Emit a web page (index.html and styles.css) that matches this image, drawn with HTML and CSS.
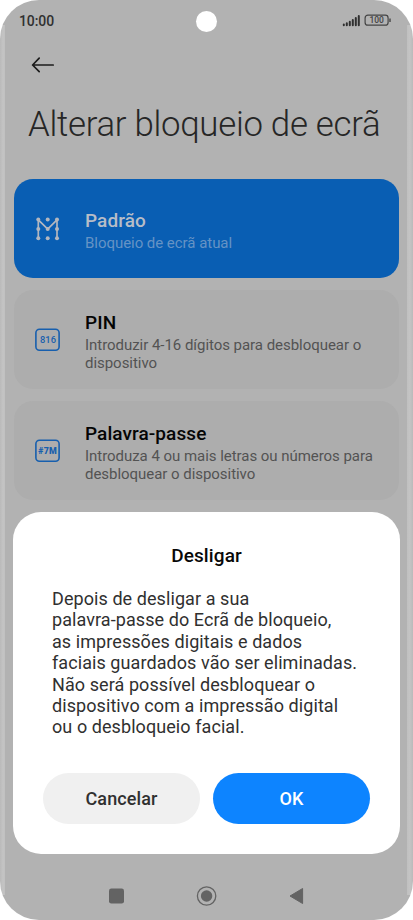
FILE: index.html
```html
<!DOCTYPE html>
<html lang="pt">
<head>
<meta charset="utf-8">
<title>Alterar bloqueio de ecrã</title>
<link rel="stylesheet" href="styles.css">
</head>
<body>
<div class="phone">
  <header class="status">
    <span class="clock">10:00</span>
    <span class="camera"></span>
    <svg class="indicators" width="50" height="14" viewBox="0 0 50 14">
      <path d="M1.8 10.6v.6M4.8 9.300v1.900M7.8 7.700v3.500M10.8 5.900v5.300M13.8 4v7.200M16.800 2v9.200" stroke="#303030" stroke-width="2" stroke-linecap="round" fill="none"/>
      <rect x="23.1" y="1.200" width="23" height="10" rx="2.8" fill="none" stroke="#444" stroke-width="1.2"/>
      <path d="M48 4.500v3.4" stroke="#444" stroke-width="1.4"/>
      <text class="charge" x="34.7" y="9.200" text-anchor="middle">100</text>
    </svg>
  </header>
  <svg class="back" width="24" height="18" viewBox="0 0 24 18">
    <path d="M1.6 9h20.600M8.2 2.2L1.6 9l6.600 6.600" fill="none" stroke="#1c1c1c" stroke-width="1.7" stroke-linecap="round" stroke-linejoin="round"/>
  </svg>
  <h1>Alterar bloqueio de ecrã</h1>
  <main class="options">
    <section class="card active">
      <svg class="icon" width="26" height="26" viewBox="0 0 26 26">
        <path d="M4.300 22.200V3.800l9.400 9.200L23 3.800v18.400" fill="none" stroke="#b2b6bf" stroke-width="1.700"/>
        <g fill="#b2b6bf"><circle cx="4.300" cy="3.600" r="2"/><circle cx="13.700" cy="3.600" r="2"/><circle cx="23" cy="3.600" r="2"/><circle cx="4.300" cy="12.900" r="2"/><circle cx="13.700" cy="12.900" r="2"/><circle cx="23" cy="12.900" r="2"/><circle cx="4.300" cy="22.200" r="2"/><circle cx="13.700" cy="22.200" r="2"/><circle cx="23" cy="22.200" r="2"/></g>
      </svg>
      <div class="copy"><h2>Padrão</h2><p>Bloqueio de ecrã atual</p></div>
    </section>
    <section class="card">
      <svg class="icon" width="26" height="26" viewBox="0 0 26 26">
        <rect x="1.900" y="2.200" width="23.200" height="21" rx="3.500" fill="none" stroke="#175fae" stroke-width="1.600"/>
        <text class="code" x="14" y="16.100" text-anchor="middle">816</text>
      </svg>
      <div class="copy"><h2>PIN</h2><p>Introduzir 4-16 dígitos para desbloquear o<br>dispositivo</p></div>
    </section>
    <section class="card">
      <svg class="icon" width="26" height="26" viewBox="0 0 26 26">
        <rect x="1.900" y="2.200" width="23.200" height="21" rx="3.500" fill="none" stroke="#175fae" stroke-width="1.600"/>
        <text class="code heavy" x="13.600" y="15.900" text-anchor="middle">#7M</text>
      </svg>
      <div class="copy"><h2>Palavra-passe</h2><p>Introduza 4 ou mais letras ou números para<br>desbloquear o dispositivo</p></div>
    </section>
  </main>
  <div class="dialog" role="dialog">
    <h3>Desligar</h3>
    <p>Depois de desligar a sua<br>palavra-passe do Ecrã de bloqueio,<br>as impressões digitais e dados<br>faciais guardados vão ser eliminadas.<br>Não será possível desbloquear o<br>dispositivo com a impressão digital<br>ou o desbloqueio facial.</p>
    <div class="actions"><button class="cancel">Cancelar</button><button class="ok">OK</button></div>
  </div>
  <nav>
    <svg width="200" height="24" viewBox="0 0 200 24">
      <rect x="3" y="4.600" width="15" height="15" rx="2.300" fill="#636363"/>
      <circle cx="100.600" cy="12" r="9.200" fill="none" stroke="#636363" stroke-width="1.300"/>
      <circle cx="100.600" cy="12" r="5.700" fill="#636363"/>
      <path d="M184 12L196.600 4.500v15z" fill="#636363" stroke="#636363" stroke-width="1" stroke-linejoin="round"/>
    </svg>
  </nav>
</div>
</body>
</html>
```
FILE: styles.css
```css
* { box-sizing: border-box; }
body { margin: 0; background: #fff; font-family: Roboto, sans-serif; }
h1, h2, h3, p { margin: 0; }
.phone {
  width: 413px; height: 920px; overflow: hidden;
  border-radius: 39px; background: #b2b2b2;
  background-image: linear-gradient(to right, #bababa 0, #c4c4c4 3px, #c0c0c0 5px, #b2b2b2 5px, #b2b2b2 407px, #c0c0c0 407px, #c4c4c4 410px, #bababa 413px);
  background-size: 100% 870px; background-position: 0 25px; background-repeat: no-repeat;
  display: flex; flex-direction: column;
}
.status { height: 42px; flex: none; display: grid; grid-template-columns: 1fr 21px 1fr; align-items: center; padding: 0 20px 0 19px; }
.clock { font-size: 14px; font-weight: 500; line-height: 16px; letter-spacing: -.1px; color: #303030; }
.camera { width: 21px; height: 21px; border-radius: 50%; background: #fff; }
.indicators { justify-self: end; margin: 0 1px 0 0; }
.charge { font-size: 8.5px; font-weight: 500; fill: #444; }
.back { flex: none; margin: 14px 0 0 31px; }
h1 { font-size: 34.8px; line-height: 42px; font-weight: 300; letter-spacing: -.28px; color: #262626; margin: 29px 0 0 28px; white-space: nowrap; }
.options { margin: 34px 14px 0; display: flex; flex-direction: column; gap: 12.2px; }
.card { height: 99px; border-radius: 19px; background: #adadad; display: flex; align-items: center; padding-left: 20px; }
.active { background: #095eb3; }
.icon { flex: none; }
.copy { margin-left: 25px; padding-top: 2px; white-space: nowrap; }
h2 { font-size: 19px; line-height: 24px; font-weight: 500; letter-spacing: .08px; color: #050505; }
.copy p { font-size: 15px; line-height: 18px; letter-spacing: -.04px; color: #535353; padding-top: 1px; margin-bottom: -1px; }
.active h2 { color: #b7bdc7; }
.active p { color: #6593c5; }
.code { font: 500 9.3px Roboto, sans-serif; fill: #175fae; }
.heavy { font-size: 8.8px; font-weight: 900; letter-spacing: .2px; }
.dialog { margin: 11.6px 13px 0; height: 342px; border-radius: 28px; background: #fff; padding: 32px 30px 0; }
h3 { font-size: 19px; line-height: 24px; font-weight: 500; letter-spacing: .12px; text-align: center; color: #080808; }
.dialog p { margin: 20px 0 0 9px; font-size: 18px; line-height: 21.4px; letter-spacing: .075px; color: #303030; white-space: nowrap; }
.actions { display: grid; grid-template-columns: 1fr 1fr; gap: 13px; margin-top: 35.2px; }
button { height: 51px; border: 0; border-radius: 26px; font: 500 18px Roboto, sans-serif; letter-spacing: .1px; padding: 0; }
.cancel { background: #f0f0f0; color: #303030; }
.ok { background: #0d84ff; color: #fff; }
nav { margin: 30px 0 0 106px; line-height: 0; }
```
